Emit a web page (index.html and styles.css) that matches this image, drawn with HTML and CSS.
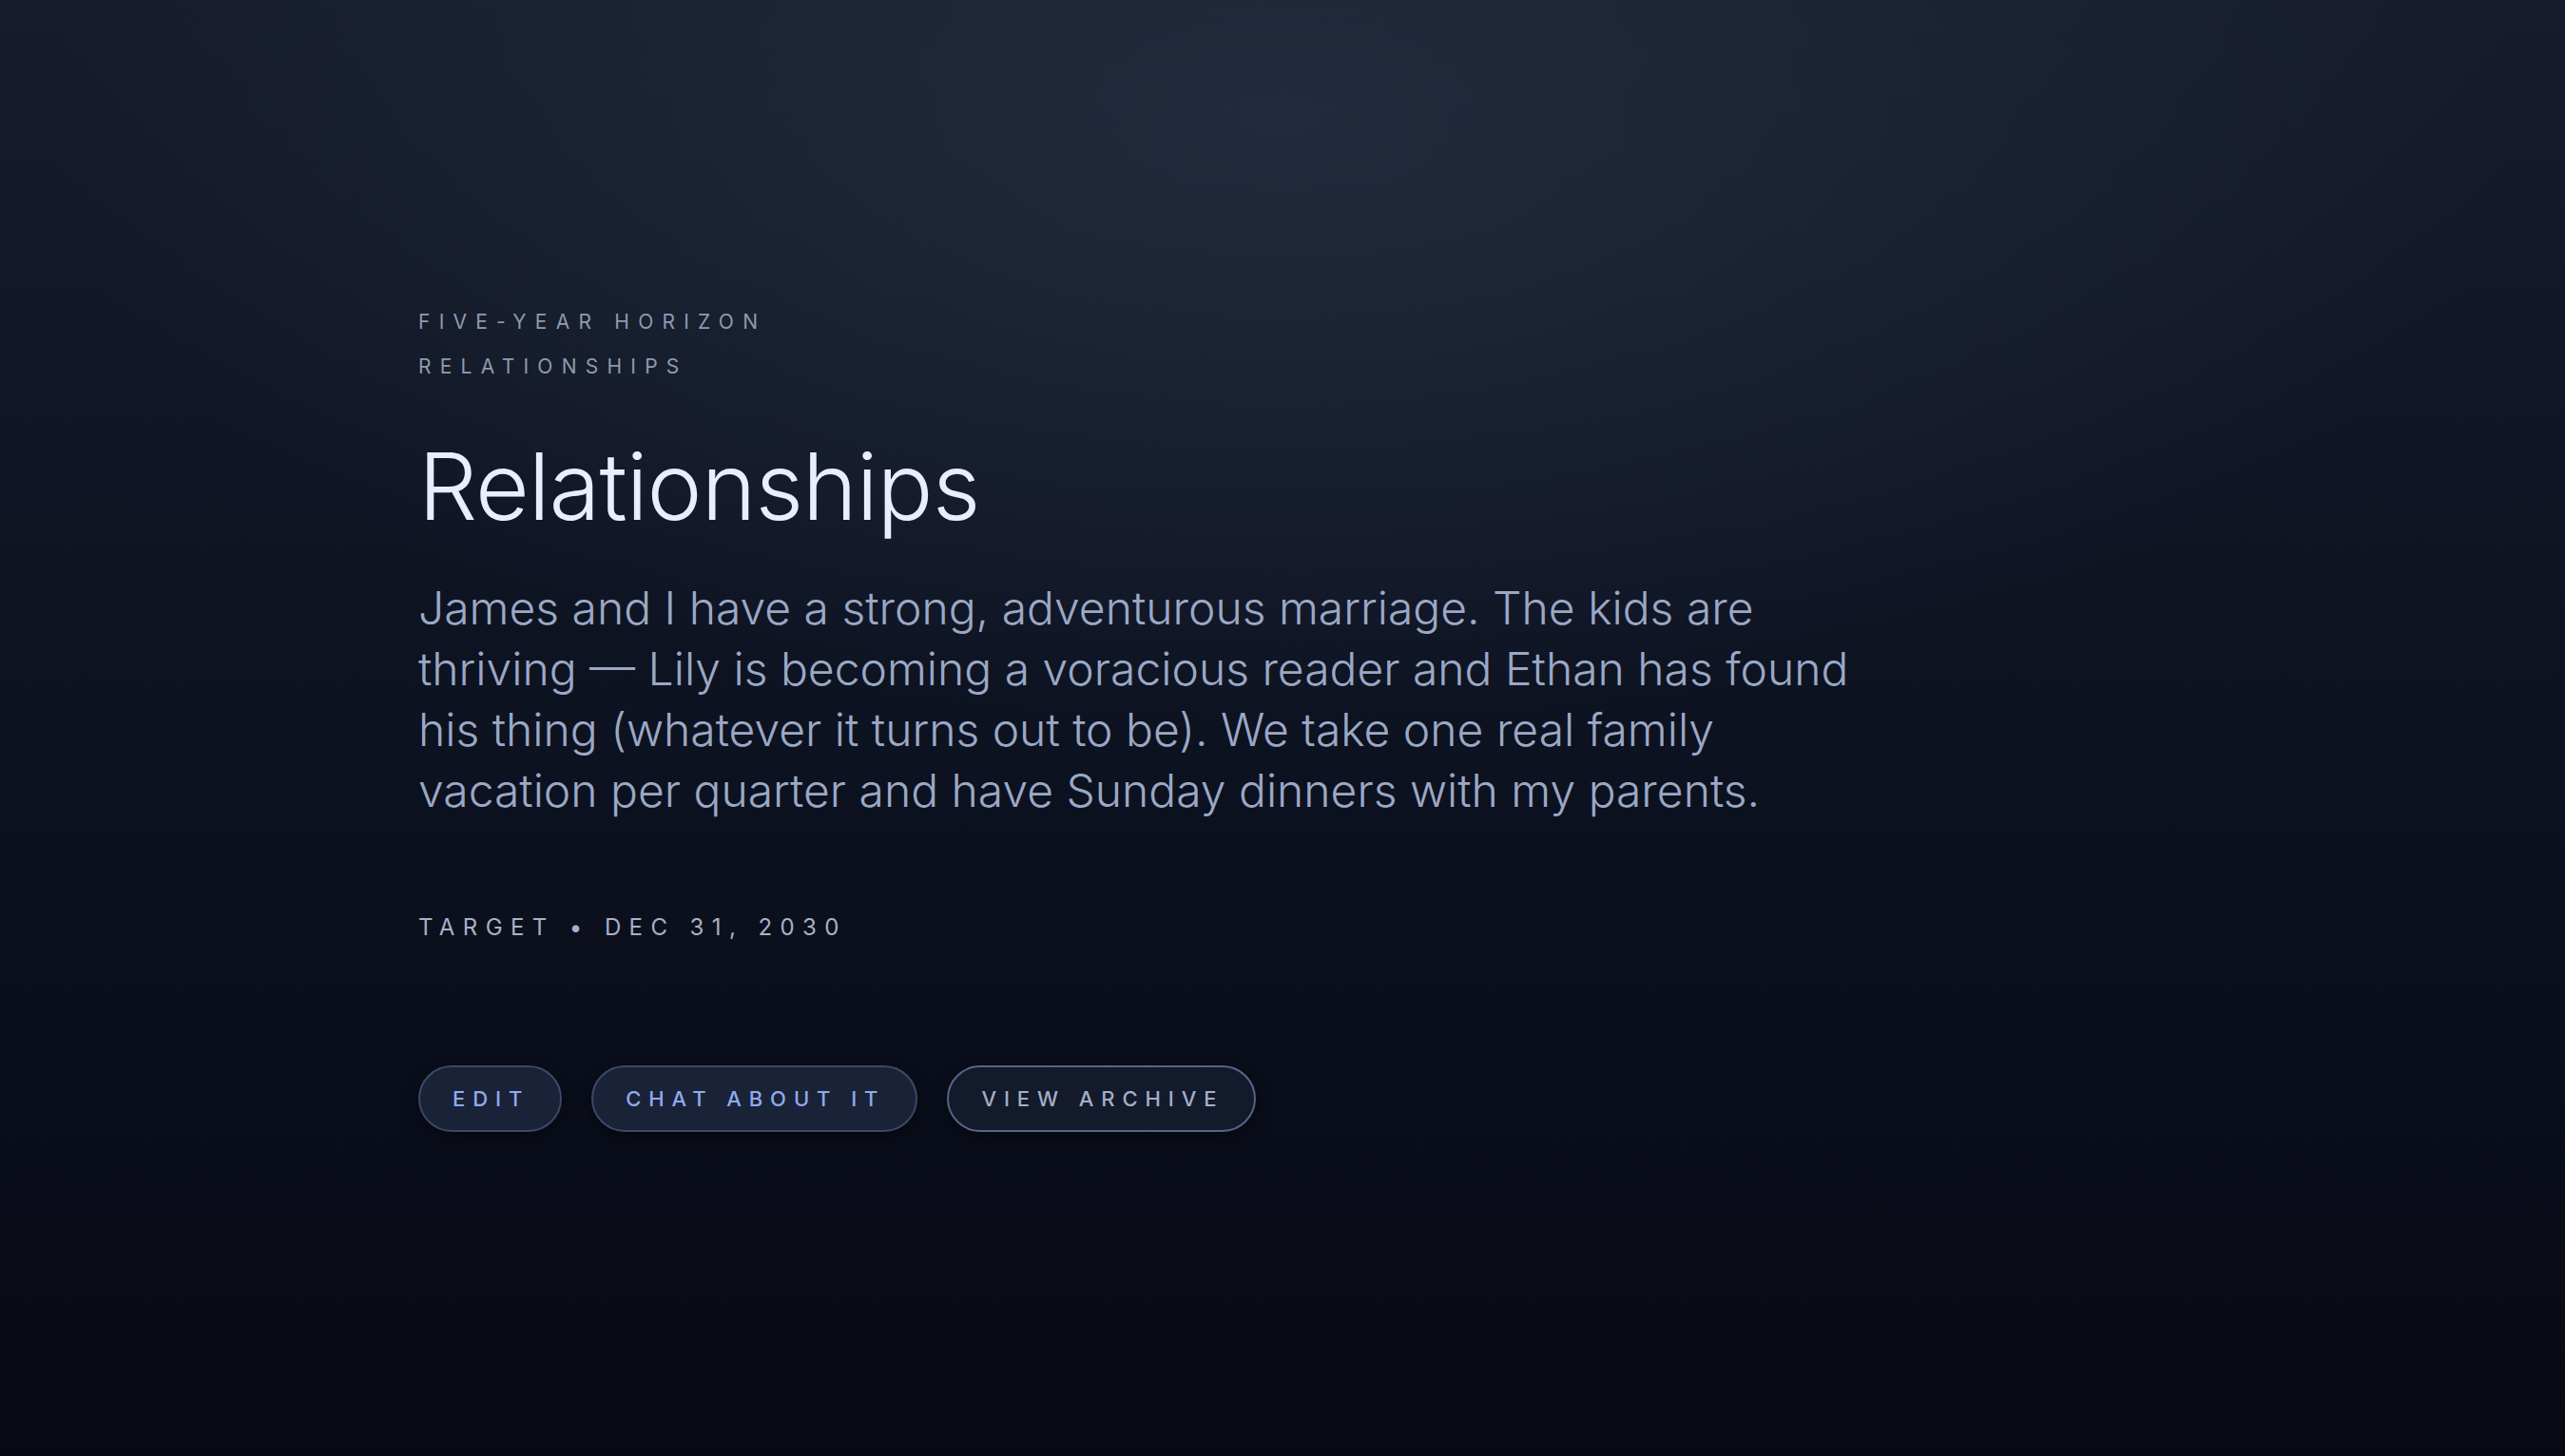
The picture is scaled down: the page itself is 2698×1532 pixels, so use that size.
FILE: index.html
```html
<!DOCTYPE html>
<html lang="en">
<head>
<meta charset="utf-8">
<title>Relationships</title>
<link rel="stylesheet" href="styles.css">
</head>
<body>
<main class="page">
  <section class="vision">
    <div class="eyebrows">
      <p class="eyebrow">Five-Year Horizon</p>
      <p class="eyebrow">Relationships</p>
    </div>
    <h1 class="title">Relationships</h1>
    <p class="body">James and I have a strong, adventurous marriage. The kids are thriving — Lily is becoming a voracious reader and Ethan has found his thing (whatever it turns out to be). We take one real family vacation per quarter and have Sunday dinners with my parents.</p>
    <p class="target">Target <span class="dot">•</span> Dec 31, 2030</p>
    <div class="actions">
      <button class="btn btn-accent">Edit</button>
      <button class="btn btn-accent">Chat about it</button>
      <button class="btn btn-muted">View archive</button>
    </div>
  </section>
</main>
</body>
</html>
```

FILE: styles.css
```css
* { box-sizing: border-box; }
html, body { margin: 0; height: 100%; }
body {
  font-family: Inter, "Noto Sans", sans-serif;
  background:
    radial-gradient(ellipse 48% 42% at 50% 8%, rgba(36, 46, 64, 0.85) 0%, rgba(36, 46, 64, 0) 100%),
    linear-gradient(180deg, #161c2c 0%, #0e1322 45%, #070a14 100%);
  color: #e6ebff;
  min-height: 100vh;
}
.page {
  min-height: 100vh;
  padding: 326px 440px 0;
}
.vision { width: 100%; }
.eyebrows { display: flex; flex-direction: column; gap: 22px; margin-bottom: 59px; }
.eyebrow {
  margin: 0;
  font-size: 21px;
  line-height: 25px;
  letter-spacing: 0.44em;
  text-transform: uppercase;
  color: #8f9ab1;
  font-weight: 400;
}
.title {
  margin: 0 0 41px;
  font-size: 98px;
  line-height: 110px;
  font-weight: 300;
  letter-spacing: -0.01em;
  color: #e8edff;
}
.body {
  margin: 0;
  max-width: 1530px;
  font-size: 48px;
  line-height: 64px;
  font-weight: 300;
  color: #9ba8c5;
}
.target {
  margin: 97px 0 0;
  font-size: 24px;
  line-height: 29px;
  letter-spacing: 0.35em;
  text-transform: uppercase;
  color: #a9b1c6;
}
.dot { font-size: 1em; }
.actions { display: flex; gap: 31px; margin-top: 131px; }
.btn {
  height: 70px;
  padding: 0 32px 0 34px;
  border-radius: 35px;
  font-family: Inter, "Noto Sans", sans-serif;
  font-size: 22px;
  letter-spacing: 0.36em;
  text-transform: uppercase;
  font-weight: 500;
  box-shadow: 0 6px 18px rgba(0, 0, 0, 0.45);
  cursor: pointer;
}
.btn-accent {
  background: #1a2237;
  border: 2px solid #3b4968;
  color: #8eaaf0;
}
.btn-muted {
  background: #121a2c;
  border: 2px solid #56658a;
  color: #a4aec6;
}
```
